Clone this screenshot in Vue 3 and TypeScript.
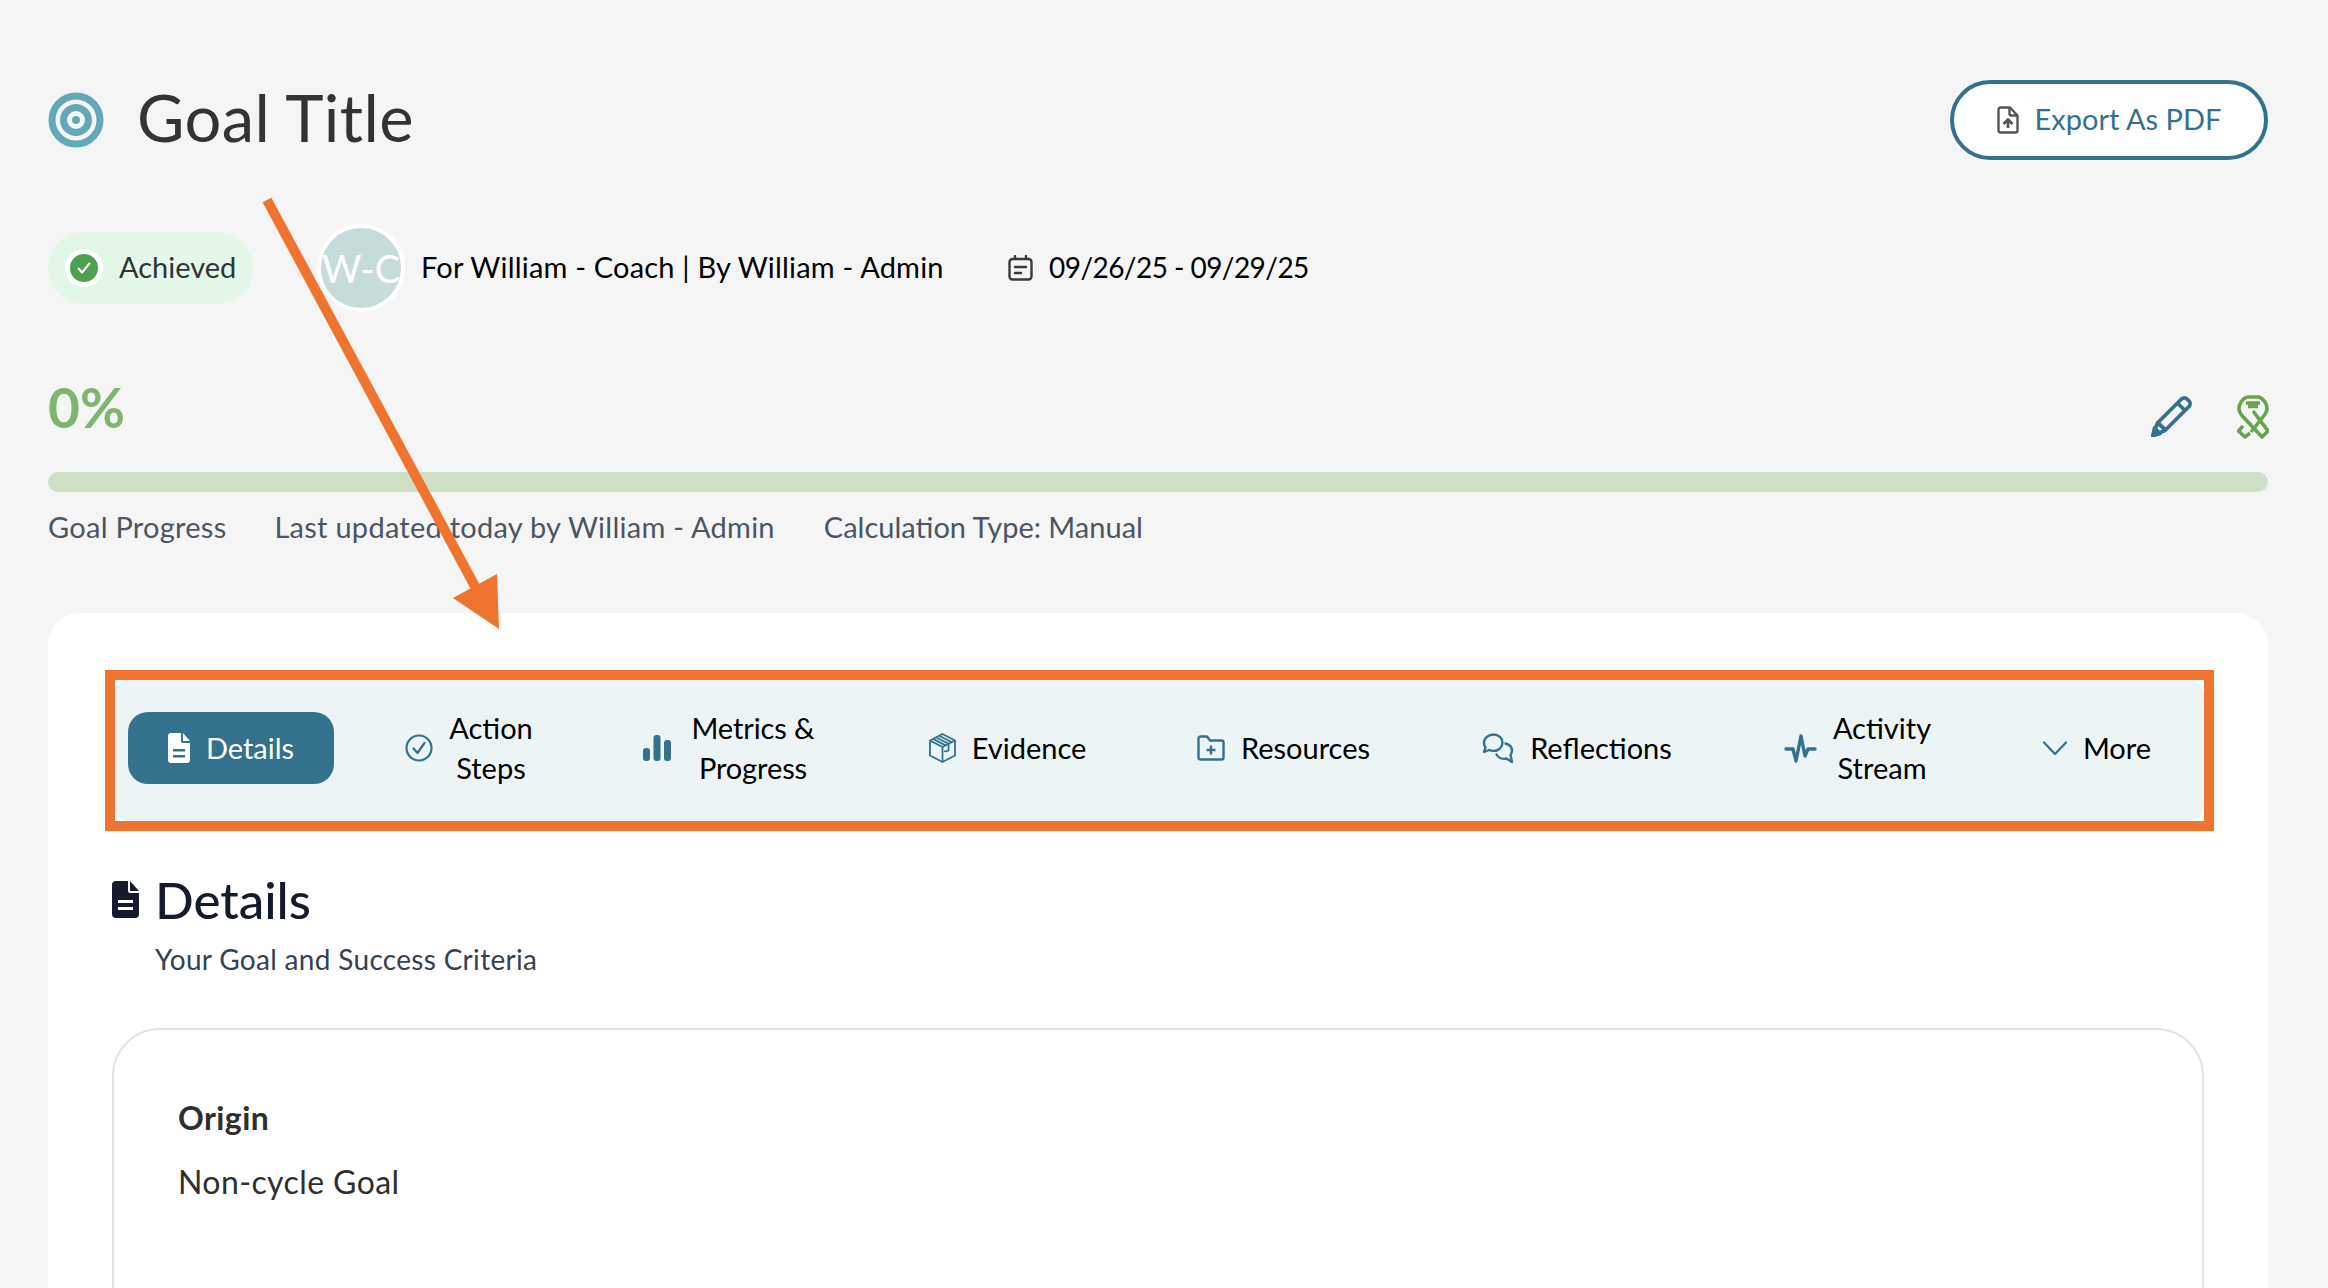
<script setup lang="ts">
interface Tab {
  id: string
  lines: string[]
}
const tabs: Tab[] = [
  { id: 'details', lines: ['Details'] },
  { id: 'action', lines: ['Action', 'Steps'] },
  { id: 'metrics', lines: ['Metrics &', 'Progress'] },
  { id: 'evidence', lines: ['Evidence'] },
  { id: 'resources', lines: ['Resources'] },
  { id: 'reflections', lines: ['Reflections'] },
  { id: 'activity', lines: ['Activity', 'Stream'] },
  { id: 'more', lines: ['More'] },
]
</script>

<template>
  <div class="page">
    <header class="head">
      <div class="title-wrap">
        <svg class="target" viewBox="0 0 56 56" fill="none" stroke="#61A9B8">
          <circle cx="28" cy="28" r="24" stroke-width="7" />
          <circle cx="28" cy="28" r="12.500" stroke-width="7" />
          <circle cx="28" cy="28" r="4" fill="#61A9B8" stroke="none" />
        </svg>
        <h1>Goal Title</h1>
      </div>
      <button class="export">
        <svg viewBox="0 0 22 28" width="22" height="28" fill="none" stroke="#555" stroke-width="2.400" stroke-linejoin="round">
          <path d="M3.500 1.500h9.500l7.500 8v15a2 2 0 0 1-2 2h-15a2 2 0 0 1-2-2v-21a2 2 0 0 1 2-2z" />
          <path d="M12.500 1.500v6a2 2 0 0 0 2 2h6" />
          <path d="M11 22v-8M6.500 18 11 13.500l4.500 4.500" stroke-width="2.800" />
        </svg>
        <span>Export As PDF</span>
      </button>
    </header>

    <div class="meta">
      <div class="pill">
        <span class="check">
          <svg viewBox="0 0 16 16" width="16" height="16" fill="none" stroke="#fff" stroke-width="2" stroke-linecap="round" stroke-linejoin="round"><path d="M2.500 8.500 6 12.500 13.500 3.500" /></svg>
        </span>
        <span class="lift">Achieved</span>
      </div>
      <div class="avatar">W-C</div>
      <span class="people lift">For William - Coach | By William - Admin</span>
      <svg class="cal" viewBox="0 0 25 26" width="25" height="26" fill="none" stroke="#3a3a3a" stroke-width="2.400" stroke-linecap="round">
        <rect x="1.500" y="4" width="22" height="20.500" rx="3" />
        <path d="M7 1v3M18 1v3M7 12h11M7 18h6" />
      </svg>
      <span class="dates lift">09/26/25 - 09/29/25</span>
    </div>

    <div class="progress-head">
      <strong>0%</strong>
      <div class="progress-icons">
        <svg viewBox="0 0 42 42" width="42" height="42" fill="none" stroke="#33718D" stroke-width="3.800" stroke-linejoin="round">
          <path d="M2 40.500 6.500 28 30.500 4a4 4 0 0 1 5.500 0l2 2a4 4 0 0 1 0 5.500L14 35.500z" />
          <path d="M7 28l8 7.500M26.500 8l8 8" />
          <path d="M2 40.500 3.500 33 9 38.500z" fill="#33718D" />
        </svg>
        <svg viewBox="0 0 32 44" width="32" height="44" fill="none" stroke="#68A450" stroke-width="3.600" stroke-linejoin="round">
          <path d="M10 2h12c4.500 1.500 8 6.500 8 12 0 2.500-1 4-2.500 6L14 37" />
          <path d="M10 2C5.500 3.500 2 8.500 2 14c0 2.500 1 4 2.500 6L25 42l6-6-15-20" />
          <path d="M9 8h14M11 11.500h10" />
          <path d="M6 31l-4.500 5L8 42l5-4" />
        </svg>
      </div>
    </div>
    <div class="bar"></div>
    <div class="captions">
      <span>Goal Progress</span>
      <span>Last updated today by William - Admin</span>
      <span class="calc">Calculation Type: Manual</span>
    </div>

    <main class="card">
      <nav class="tabs">
        <div v-for="t in tabs" :key="t.id" class="tab" :class="[`tab-${t.id}`, { active: t.id === 'details' }]">
          <svg v-if="t.id === 'details'" viewBox="0 0 22 30" width="22" height="30" fill="#fff">
            <path fill-rule="evenodd" d="M3 0h10v8a2 2 0 0 0 2 2h7v17a3 3 0 0 1-3 3H3a3 3 0 0 1-3-3V3a3 3 0 0 1 3-3zM15 0l7 8h-7zM5 16v2.500h12V16zM5 22v2.500h12V22z" />
          </svg>
          <svg v-else-if="t.id === 'action'" viewBox="0 0 28 28" width="28" height="28" fill="none" stroke="#33718D" stroke-width="2.200">
            <circle cx="14" cy="14" r="12.500" />
            <path d="M8.500 14.500 12.500 19 19.500 9" stroke-linecap="round" stroke-linejoin="round" />
          </svg>
          <svg v-else-if="t.id === 'metrics'" viewBox="0 0 28 26" width="28" height="26" fill="#33718D">
            <rect x="0" y="13" width="7" height="13" rx="3" />
            <rect x="10.500" y="0" width="7" height="26" rx="3" />
            <rect x="21" y="5" width="7" height="21" rx="3" />
          </svg>
          <svg v-else-if="t.id === 'evidence'" viewBox="0 0 27 30" width="27" height="30" fill="none" stroke="#33718D" stroke-width="1.800" stroke-linejoin="round">
            <path d="M13.500 1 26 7.500v15L13.500 29 1 22.500v-15z" />
            <path d="M1 7.500 13.500 14 26 7.500M13.500 14v15" />
            <path d="M7 4.300 19.500 10.800v6.700l-2.500 1-2-.5M10.300 2.700 22.800 9.200M4 5.900 16.500 12.400" />
          </svg>
          <svg v-else-if="t.id === 'resources'" viewBox="0 0 28 26" width="28" height="26" fill="none" stroke="#33718D" stroke-width="2.400" stroke-linejoin="round">
            <path d="M1.500 3.500a2 2 0 0 1 2-2H10l3 4h11.500a2 2 0 0 1 2 2v15a2 2 0 0 1-2 2h-21a2 2 0 0 1-2-2z" />
            <path d="M14 10.500v9M9.500 15h9" />
          </svg>
          <svg v-else-if="t.id === 'reflections'" viewBox="0 0 32 31" width="32" height="31" fill="none" stroke="#33718D" stroke-width="2.400" stroke-linejoin="round" stroke-linecap="round">
            <path d="M11.500 1.500c5 0 9 3.600 9 8.200s-4 8.200-9 8.200c-1.500 0-3-.3-4.200-.9L2 19l1.500-4.500c-1-1.400-1.500-3-1.500-4.800 0-4.600 4.500-8.200 9.500-8.200z" />
            <path d="M23.500 10.500c3.500 1 6.500 3.500 6.500 7 0 1.700-.6 3.200-1.500 4.400L30 29l-5.500-3.500c-4 1-8.200-.7-10-4" />
          </svg>
          <svg v-else-if="t.id === 'activity'" viewBox="0 0 33 29" width="33" height="29" fill="none" stroke="#33718D" stroke-width="3.400" stroke-linejoin="round" stroke-linecap="round">
            <path d="M2 15h7l3 12 5-25 4 20 3-7h7" />
          </svg>
          <svg v-else viewBox="0 0 26 16" width="26" height="16" fill="none" stroke="#33718D" stroke-width="2.200" stroke-linecap="round" stroke-linejoin="round">
            <path d="M2 2.500 13 14 24 2.500" />
          </svg>
          <span class="tab-label"><span v-for="l in t.lines" :key="l">{{ l }}</span></span>
        </div>
      </nav>

      <section class="details-head">
        <svg viewBox="0 0 27 37" width="27" height="37" fill="#141B2D">
          <path fill-rule="evenodd" d="M4 0h12v10a2 2 0 0 0 2 2h9v21a4 4 0 0 1-4 4H4a4 4 0 0 1-4-4V4a4 4 0 0 1 4-4zM18 0l9 10h-9zM6 19v3h15v-3zM6 26v3h15v-3z" />
        </svg>
        <h2>Details</h2>
      </section>
      <p class="sub">Your Goal and Success Criteria</p>

      <div class="origin">
        <h3>Origin</h3>
        <p>Non-cycle Goal</p>
      </div>
    </main>

    <svg class="callout-arrow" viewBox="0 0 2328 1288" width="2328" height="1288" aria-hidden="true">
      <path d="M267 200 L478 592" stroke="#EE7430" stroke-width="10" fill="none" />
      <path d="M499 629 L453 598 L497 574 Z" fill="#EE7430" />
    </svg>
    <div class="callout-box"></div>
  </div>
</template>

<style>
html, body { margin: 0; background: #f5f5f5; }
</style>

<style scoped>
.page {
  position: relative;
  box-sizing: border-box;
  width: 2328px;
  height: 1288px;
  overflow: hidden;
  padding: 80px 60px 0 48px;
  background: #f5f5f5;
  font-family: Lato, "Noto Sans", sans-serif;
  color: #000;
}
.head { display: flex; justify-content: space-between; align-items: center; height: 80px; }
.title-wrap { display: flex; align-items: center; gap: 33px; }
.target { width: 56px; height: 56px; }
h1 { margin: 0; padding-bottom: 6px; font-size: 65px; font-weight: 400; letter-spacing: .4px; color: #333; line-height: 80px; }
.export {
  box-sizing: border-box;
  display: flex; align-items: center; justify-content: center; gap: 16px;
  width: 318px; height: 80px;
  border: 4px solid #33718D; border-radius: 40px;
  background: #fff; color: #33718D;
  font: 400 29px Lato, sans-serif;
}
.export span { padding-bottom: 3px; }
.meta { display: flex; align-items: center; height: 88px; margin-top: 64px; font-size: 29px; }
.lift { padding-bottom: 3px; }
.pill {
  box-sizing: border-box;
  display: flex; align-items: center; gap: 16px;
  width: 205px; height: 72px; padding-left: 17px;
  border-radius: 36px; background: #E3F8E9; color: #333;
}
.check {
  box-sizing: content-box;
  display: flex; align-items: center; justify-content: center;
  width: 28px; height: 28px; border-radius: 50%;
  background: #4CA050; border: 5px solid #fff;
}
.avatar {
  box-sizing: border-box;
  display: flex; align-items: center; justify-content: center;
  width: 88px; height: 88px; margin-left: 64px;
  border: 4px solid #fff; border-radius: 50%;
  background: #C5DCDA; color: #fff; font-size: 38px; overflow: hidden;
}
.people { margin-left: 16px; width: 524px; white-space: nowrap; letter-spacing: .2px; }
.cal { margin-left: 63px; }
.dates { margin-left: 16px; white-space: nowrap; font-size: 28px; letter-spacing: -.55px; }
.progress-head { display: flex; justify-content: space-between; align-items: center; height: 50px; margin-top: 70px; }
.progress-head strong { font-size: 55px; font-weight: 700; color: #7FB56F; }
.progress-icons { display: flex; align-items: flex-start; gap: 44px; margin-top: 20px; margin-right: -1px; }
.bar { height: 20px; margin-top: 40px; border-radius: 10px; background: #CDE0C5; }
.captions { display: flex; gap: 48px; margin-top: 17px; font-size: 29px; line-height: 36px; color: #4B5563; letter-spacing: .26px; }
.captions .calc { letter-spacing: 0; margin-left: 1px; }
.card {
  box-sizing: border-box;
  height: 700px; margin-top: 68px; padding: 67px 64px 0 65px;
  border-radius: 32px 32px 0 0; background: #fff;
}
.tabs {
  display: grid;
  grid-template-columns: 206px 206px 254px 235px 253px 270px 227px 184px;
  column-gap: 32px;
  align-items: center;
  box-sizing: border-box;
  height: 141px; padding: 0 0 5px 15px;
  border-radius: 16px; background: #ECF4F6;
}
.tab {
  display: flex; align-items: center; justify-content: center; gap: 16px;
  font-size: 29px; line-height: 40px;
}
.tab.active { height: 72px; border-radius: 20px; background: #33718D; color: #fff; }
.tab-metrics { gap: 20px; padding-right: 4px; letter-spacing: -.1px; }
.tab-more { padding-left: 3px; gap: 15px; }
.tab-label { display: flex; flex-direction: column; align-items: center; }
.details-head { display: flex; align-items: center; gap: 16px; margin-top: 48px; height: 60px; }
.details-head svg { margin-left: -1px; }
h2 { margin: 0; font-size: 51px; font-weight: 500; color: #141B2D; }
.sub { margin: 10px 0 0 42px; font-size: 28px; line-height: 40px; color: #374151; letter-spacing: .31px; }
.origin {
  box-sizing: border-box;
  height: 400px; margin: 49px 0 0 -1px; padding: 66px 64px;
  border: 2px solid #E2E2E2; border-radius: 48px;
  color: #2F2F2F; font-size: 32px;
}
h3 { margin: 0; font-size: 32px; font-weight: 700; line-height: 44px; letter-spacing: .4px; }
.origin p { margin: 20px 0 0; line-height: 44px; letter-spacing: .4px; }
.callout-arrow { position: absolute; left: 0; top: 0; pointer-events: none; }
.callout-box {
  position: absolute; left: 105px; top: 670px;
  box-sizing: border-box; width: 2109px; height: 161px;
  border: 10px solid #EE7430; pointer-events: none;
}
</style>
